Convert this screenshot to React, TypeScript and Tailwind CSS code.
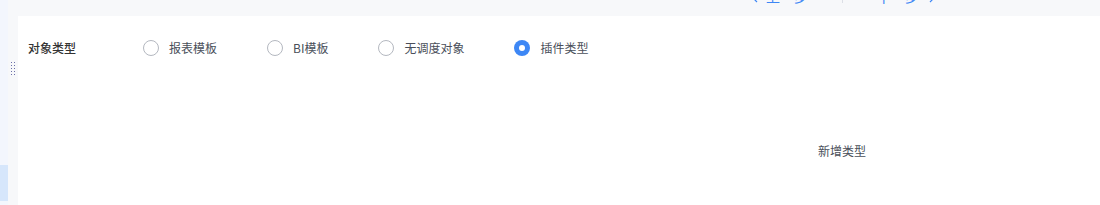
import React from 'react'

const options = ['报表模板', 'BI模板', '无调度对象', '插件类型']

function Radio({ label, checked }: { label: string; checked?: boolean }) {
  return (
    <label className="flex items-center gap-[10px]">
      {checked ? (
        <span className="flex h-4 w-4 items-center justify-center rounded-full bg-[#3d87f5]">
          <span className="h-[6px] w-[6px] rounded-full bg-white" />
        </span>
      ) : (
        <span className="h-4 w-4 rounded-full border border-[#b4b8c0] bg-white" />
      )}
      <span className="text-[12px] text-[#4a4f5a]">{label}</span>
    </label>
  )
}

function Chevron({ dir }: { dir: 'left' | 'right' }) {
  return (
    <svg width="8" height="14" viewBox="0 0 8 14" fill="none" stroke="#3d87f5" strokeWidth="1.2">
      {dir === 'left' ? <path d="M7 1 1 7l6 6" /> : <path d="M1 1l6 6-6 6" />}
    </svg>
  )
}

export default function App() {
  return (
    <div
      className="flex h-[205px] w-[1100px] overflow-hidden bg-[#f7f8fa]"
      style={{ fontFamily: '"Noto Sans CJK SC", "Noto Sans", sans-serif' }}
    >
      {/* left nav strip */}
      <div className="flex w-2 flex-col bg-[#f3f6fd]">
        <div className="h-[165px]" />
        <div className="h-[36px] bg-[#d6e6fb]" />
      </div>
      <div className="relative w-[10px]">
        <div className="absolute left-[3px] top-[62px] grid grid-cols-2 gap-x-[2px] gap-y-[2px]">
          {Array.from({ length: 10 }).map((_, i) => (
            <span key={i} className="h-[1px] w-[1px] bg-[#6b6fa8]" />
          ))}
        </div>
      </div>

      <div className="flex flex-1 flex-col">
        {/* top step bar, mostly scrolled out */}
        <div className="h-4 overflow-hidden">
          <div className="-mt-[11px] flex items-center pl-[732px] text-[14px] leading-[14px] text-[#3d87f5]">
            <span className="flex items-center gap-[8px]">
              <Chevron dir="left" />
              <span>上一步</span>
            </span>
            <span className="mx-[34px] h-[14px] w-px bg-[#dcdfe6]" />
            <span className="flex items-center gap-[10px]">
              <span>下一步</span>
              <Chevron dir="right" />
            </span>
          </div>
        </div>

        {/* main panel */}
        <div className="flex-1 bg-white">
          <div className="flex h-[64px] items-center pl-[10px]">
            <span className="w-[115px] text-[12px] font-medium text-[#333]">对象类型</span>
            <div className="flex items-center gap-[50px]">
              {options.map((o) => (
                <Radio key={o} label={o} checked={o === '插件类型'} />
              ))}
            </div>
          </div>
          <div className="pl-[800px] pt-[62px] text-[12px] text-[#4a4f5a]">新增类型</div>
        </div>
      </div>
    </div>
  )
}
